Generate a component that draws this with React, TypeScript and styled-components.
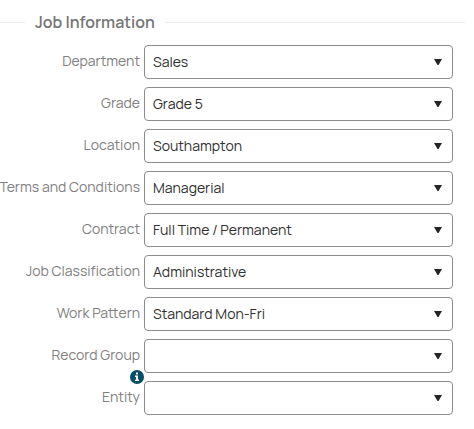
import React from "react";
import styled, { createGlobalStyle } from "styled-components";

const GlobalStyle = createGlobalStyle`
  *, *::before, *::after { box-sizing: border-box; }
  body {
    margin: 0;
    background: #fff;
    color: #757575;
    font-family: Manrope, Inter, "Open Sans", sans-serif;
    font-size: 14px;
    line-height: 20px;
  }
`;

const Form = styled.form`
  padding: 12px 9px 14px 0;
`;

const Section = styled.fieldset`
  margin: 0;
  padding: 0 12px 0 0;
  min-width: 0;
  border: 0;
  border-top: 1px solid #ececec;
`;

const SectionTitle = styled.legend`
  margin-left: 25px;
  padding: 0 10px;
  font-size: 16px;
  font-weight: 600;
  line-height: 21px;
`;

const Fields = styled.div`
  display: grid;
  gap: 8px;
  padding-top: 12px;
`;

const Row = styled.div`
  display: grid;
  grid-template-columns: 140px minmax(0, 1fr);
  column-gap: 4px;
  height: 34px;
`;

const LabelCell = styled.div`
  position: relative;
  display: flex;
  justify-content: flex-end;
  padding-top: 6px;
`;

const Label = styled.label`
  color: #808080;
  font-weight: 400;
  white-space: nowrap;
`;

const InfoButton = styled.button`
  position: absolute;
  right: -4px;
  top: 31px;
  width: 14px;
  height: 14px;
  padding: 0;
  border: 0;
  border-radius: 50%;
  background: none;
  cursor: pointer;

  svg { display: block; }
`;

const SelectBox = styled.div`
  display: grid;
  align-items: center;

  > * { grid-area: 1 / 1; }
`;

const Select = styled.select`
  appearance: none;
  width: 100%;
  height: 34px;
  padding: 0 30px 0 8px;
  border: 1px solid #8c8c8c;
  border-radius: 4px;
  background: #fff;
  color: #303030;
  font: inherit;
`;

const Arrow = styled.svg`
  justify-self: end;
  margin-right: 11px;
  pointer-events: none;
`;

type Field = { id: string; label: string; value: string; info?: string };

const fields: Field[] = [
  { id: "department", label: "Department", value: "Sales" },
  { id: "grade", label: "Grade", value: "Grade 5" },
  { id: "location", label: "Location", value: "Southampton" },
  { id: "terms", label: "Terms and Conditions", value: "Managerial" },
  { id: "contract", label: "Contract", value: "Full Time / Permanent" },
  { id: "classification", label: "Job Classification", value: "Administrative" },
  { id: "pattern", label: "Work Pattern", value: "Standard Mon-Fri" },
  { id: "group", label: "Record Group", value: "", info: "About record groups" },
  { id: "entity", label: "Entity", value: "" },
];

function InfoIcon() {
  return (
    <svg width="14" height="14" viewBox="0 0 14 14" aria-hidden="true">
      <circle cx="7" cy="7" r="7" fill="#064d66" />
      <path fill="#fff" d="M6 2.5h2v2H6zM5 5.5h3v4h1V11H5V9.5h1V7H5z" />
    </svg>
  );
}

function SelectField({ id, label, value, info }: Field) {
  return (
    <Row>
      <LabelCell>
        <Label htmlFor={id}>{label}</Label>
        {info && (
          <InfoButton type="button" aria-label={info}>
            <InfoIcon />
          </InfoButton>
        )}
      </LabelCell>
      <SelectBox>
        <Select id={id} defaultValue={value}>
          <option value={value}>{value}</option>
        </Select>
        <Arrow width="8" height="6" viewBox="0 0 8 6" aria-hidden="true">
          <path d="M0 0h8L4.5 6h-1z" fill="#242424" />
        </Arrow>
      </SelectBox>
    </Row>
  );
}

export default function App() {
  return (
    <>
      <GlobalStyle />
      <Form>
        <Section>
          <SectionTitle>Job Information</SectionTitle>
          <Fields>
            {fields.map((field) => (
              <SelectField key={field.id} {...field} />
            ))}
          </Fields>
        </Section>
      </Form>
    </>
  );
}
